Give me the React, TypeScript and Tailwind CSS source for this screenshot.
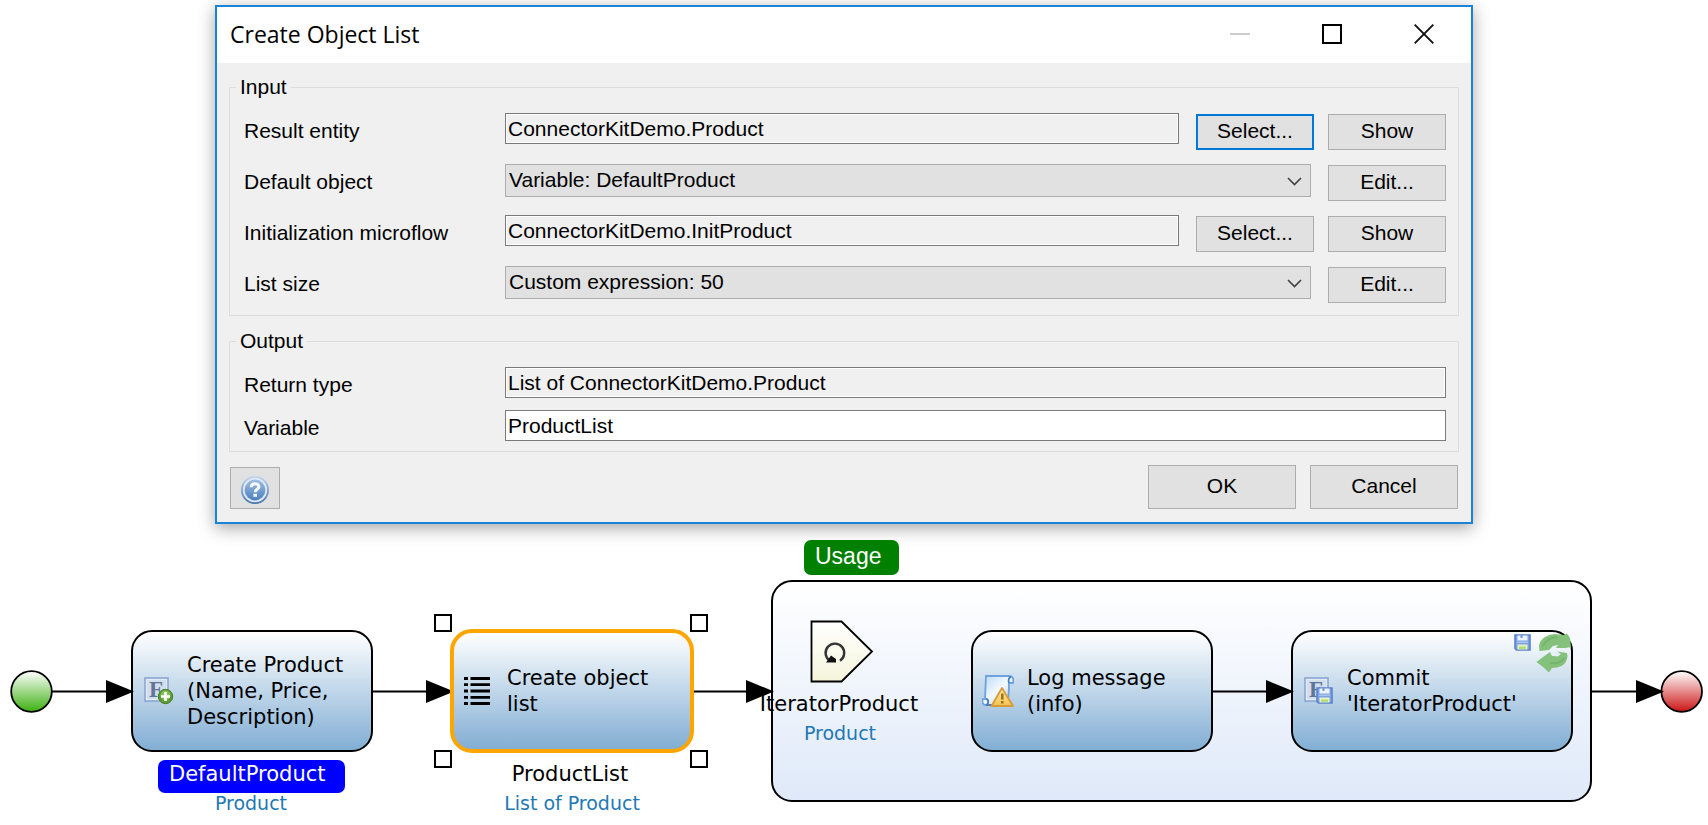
import type { ReactNode } from "react";

const buttonBase =
  "shrink-0 bg-[#e1e1e1] text-center text-[21px] leading-[24px] text-black";

function DialogButton({ children, focused = false }: { children: ReactNode; focused?: boolean }) {
  return (
    <button
      type="button"
      className={
        buttonBase +
        " h-[36px] w-[118px] self-end pb-[3px] " +
        (focused ? "border-2 border-[#0078d7]" : "border border-[#adadad]")
      }
    >
      {children}
    </button>
  );
}

function FormRow({ id, label, children }: { id: string; label: string; children: ReactNode }) {
  return (
    <div className="flex h-[37px] items-start">
      <label htmlFor={id} className="w-[261px] shrink-0 text-[21px] leading-[36px]">
        {label}
      </label>
      {children}
    </div>
  );
}

function TextField({ id, value, readOnly = false }: { id: string; value: string; readOnly?: boolean }) {
  return (
    <input
      id={id}
      type="text"
      defaultValue={value}
      readOnly={readOnly}
      className={
        "h-[31px] min-w-0 flex-1 rounded-none border border-[#7a7a7a] pl-[2px] text-[21px] leading-[24px] outline-none " +
        (readOnly ? "bg-[#f0f0f0] shadow-[inset_0_0_0_1px_#ffffff]" : "bg-white")
      }
    />
  );
}

function ComboField({ id, value }: { id: string; value: string }) {
  return (
    <div className="relative min-w-0 flex-1">
      <select
        id={id}
        defaultValue={value}
        className="block h-[33px] w-full appearance-none rounded-none border border-[#adadad] bg-[#e1e1e1] pb-[2px] pl-[3px] text-[21px] leading-[24px] outline-none"
      >
        <option>{value}</option>
      </select>
      <svg
        className="pointer-events-none absolute top-[13px] right-[9px] h-[9px] w-[15px]"
        viewBox="0 0 15 9"
        fill="none"
        stroke="#404040"
        strokeWidth="1.6"
      >
        <path d="M1 1L7.5 7.5L14 1" />
      </svg>
    </div>
  );
}

function HelpIcon() {
  return (
    <svg className="h-[30px] w-[30px]" viewBox="0 0 30 30" aria-hidden="true">
      <defs>
        <linearGradient id="helpRing" x1="0" y1="0" x2="0" y2="1">
          <stop offset="0" stopColor="#c3d7ee" />
          <stop offset="1" stopColor="#4472ae" />
        </linearGradient>
        <linearGradient id="helpFill" x1="0" y1="0" x2="0" y2="1">
          <stop offset="0" stopColor="#9dbde3" />
          <stop offset="1" stopColor="#4f80bd" />
        </linearGradient>
      </defs>
      <circle cx="15" cy="15" r="14" fill="url(#helpRing)" />
      <circle cx="15" cy="15" r="12.2" fill="#dfe9f5" />
      <circle cx="15" cy="15" r="10.4" fill="url(#helpFill)" />
      <path
        d="M11.3 12.2C11.3 7.6 18.9 7.8 18.9 11.8C18.9 14.4 15.2 14.2 15.2 17.2"
        fill="none"
        stroke="#f4f8fc"
        strokeWidth="3"
      />
      <rect x="13.4" y="18.8" width="3.6" height="3" fill="#f4f8fc" />
    </svg>
  );
}

function EntityGlyph() {
  return (
    <>
      <rect x="1" y="1" width="23" height="23" fill="#e3ebf5" stroke="#8ba6d3" strokeWidth="1.6" />
      <rect x="3" y="3" width="19" height="19" fill="#d3deec" />
      <text x="5" y="20" fontFamily="Liberation Serif, serif" fontWeight="700" fontSize="23" fill="#5f7699">
        F
      </text>
    </>
  );
}

function FloppyGlyph() {
  return (
    <>
      <path d="M1 1H16V16H2.5L1 14.5Z" fill="#7fa3e2" stroke="#5b82cd" strokeWidth="1.6" />
      <rect x="3.500" y="1.500" width="10" height="5" fill="#eef4fc" />
      <rect x="6.500" y="1" width="2" height="3" fill="#6d94dd" />
      <rect x="3" y="7.500" width="11" height="1.500" fill="#a9c3ee" />
      <rect x="3.500" y="10.500" width="10" height="5" fill="#e6f2c4" />
      <rect x="5" y="12.500" width="7" height="2.400" fill="#b4dc74" />
    </>
  );
}

function CreateIcon() {
  return (
    <svg className="h-[28px] w-[30px]" viewBox="0 0 30 28" aria-hidden="true">
      <EntityGlyph />
      <circle cx="21.5" cy="19.5" r="7.2" fill="#5d9a35" stroke="#437f25" strokeWidth="1" />
      <circle cx="21.5" cy="18.5" r="5" fill="#86bd58" />
      <path d="M21.5 15V24M17 19.5H26" stroke="#ffffff" strokeWidth="2.6" />
    </svg>
  );
}

function ListIcon() {
  return (
    <svg className="h-[28px] w-[26px]" viewBox="0 0 26 28" aria-hidden="true">
      <path
        d="M0 1.5H4M6.500 1.500H26M0 7.700H4M6.500 7.700H26M0 14H4M6.500 14H26M0 20.300H4M6.500 20.300H26M0 26.500H4M6.500 26.500H26"
        stroke="#000000"
        strokeWidth="2.8"
      />
    </svg>
  );
}

function LogIcon() {
  return (
    <svg className="h-[34px] w-[32px]" viewBox="0 0 32 34" aria-hidden="true">
      <defs>
        <linearGradient id="scroll" x1="0" y1="0" x2="1" y2="1">
          <stop offset="0" stopColor="#b9d8f8" />
          <stop offset="0.5" stopColor="#f3f9ff" />
          <stop offset="1" stopColor="#a5c8f0" />
        </linearGradient>
        <linearGradient id="warn" x1="0" y1="0" x2="0" y2="1">
          <stop offset="0" stopColor="#fff0b5" />
          <stop offset="1" stopColor="#f5c04a" />
        </linearGradient>
      </defs>
      <path
        d="M4 2H27C31 2 32 5 31 9H27C27 16 27 22 25 31H4C0 31 0 27 1 25H3Z"
        fill="url(#scroll)"
        stroke="#6ea3dd"
        strokeWidth="1.800"
      />
      <path d="M27 9C26 6 27 3 29 3M4 25C7 25 7 30 4 31H16" fill="none" stroke="#4a7fc4" strokeWidth="1.800" />
      <path d="M20 14L31 32H9.500Z" fill="url(#warn)" stroke="#d99a3a" strokeWidth="1.800" strokeLinejoin="round" />
      <path d="M20.300 19.500V25.500M20.300 27V29.500" stroke="#9a6a14" strokeWidth="2.400" />
    </svg>
  );
}

function CommitIcon() {
  return (
    <svg className="h-[28px] w-[30px]" viewBox="0 0 30 28" aria-hidden="true">
      <EntityGlyph />
      <g transform="translate(12 10)">
        <FloppyGlyph />
      </g>
    </svg>
  );
}

function RefreshIcon() {
  return (
    <svg className="h-[39px] w-[36px]" viewBox="0 0 36 39" fill="#84c17a" aria-hidden="true">
      <path d="M3.500 18L3 13C4 6 10 2 19 1L28 2L31 0.500L34 5L35 14L29 15L20 15L22 12L17 13L13 17Z" />
      <path d="M0.500 29L7 24L14 19L16 23L22 23.500L25 21L21 18.500L31 20L31.500 23C31 29 28 33 21 34.500L16 35L13 39.500L7 34Z" />
      <path d="M7 13C9 8 13 5 21 4M28 25C26 29 22 31 14 30" fill="none" stroke="#74b470" strokeWidth="2" />
    </svg>
  );
}

function Activity({
  icon,
  children,
  className,
  selected = false,
}: {
  icon: ReactNode;
  children: ReactNode;
  className: string;
  selected?: boolean;
}) {
  return (
    <div
      className={
        "absolute flex items-center bg-linear-to-b from-white to-[#82aed3] text-[21px] leading-[26px] " +
        (selected
          ? "h-[124px] rounded-[22px] border-4 border-[#ffa500] pl-[10px] "
          : "h-[122px] rounded-[21px] border-2 border-black pl-[11px] ") +
        className
      }
    >
      <div className="flex w-[43px] shrink-0 justify-start">{icon}</div>
      <p>{children}</p>
    </div>
  );
}

function Connectors() {
  const arrows = [
    [52, 106],
    [372, 426],
    [693, 746],
    [1212, 1266],
    [1592, 1636],
  ];
  return (
    <svg className="absolute top-0 left-0 h-[300px] w-[1708px]" viewBox="0 0 1708 300" aria-hidden="true">
      <defs>
        <linearGradient id="startFill" x1="0" y1="0" x2="0" y2="1">
          <stop offset="0" stopColor="#ffffff" />
          <stop offset="1" stopColor="#3cb010" />
        </linearGradient>
        <linearGradient id="endFill" x1="0" y1="0" x2="0" y2="1">
          <stop offset="0" stopColor="#ffffff" />
          <stop offset="1" stopColor="#cc1414" />
        </linearGradient>
        <linearGradient id="iteratorFill" x1="0" y1="0" x2="0" y2="1">
          <stop offset="0" stopColor="#ffffff" />
          <stop offset="1" stopColor="#f5f5dc" />
        </linearGradient>
      </defs>
      <circle cx="31.5" cy="167.500" r="20.300" fill="url(#startFill)" stroke="#000000" strokeWidth="1.800" />
      <circle cx="1681.700" cy="167.500" r="20.300" fill="url(#endFill)" stroke="#000000" strokeWidth="1.800" />
      {arrows.map(([from, head]) => (
        <g key={from}>
          <path d={`M${from} 167.500H${head}`} stroke="#000000" strokeWidth="1.800" />
          <path d={`M${head} 156V179L${head + 28} 167.500Z`} fill="#000000" />
        </g>
      ))}
      <path
        d="M811.500 97.500H841.500L872 127.500L841.500 157.500H811.500Z"
        fill="url(#iteratorFill)"
        stroke="#000000"
        strokeWidth="1.800"
      />
      <path
        d="M829.500 136.500A9.300 9.300 0 1 1 840 136.700"
        fill="none"
        stroke="#333333"
        strokeWidth="2.400"
      />
      <path d="M826 138.500H836V135L831 131.500Z" fill="#111111" />
    </svg>
  );
}

const nameLabel = "absolute text-center text-[21px] leading-[26px] whitespace-nowrap ";
const typeLabel = "absolute text-center text-[19px] leading-[24px] whitespace-nowrap text-[#1e78b4] ";
const handle = "absolute size-[18px] border-2 border-black bg-white ";

export default function App() {
  return (
    <main className="overflow-hidden bg-white font-['Liberation_Sans',Arial,sans-serif] text-black">
      <div className="pt-[5px] pr-[235px] pl-[215px]">
        <section
          role="dialog"
          aria-labelledby="dialog-title"
          className="border-2 border-[#1883d7] bg-[#f0f0f0] shadow-[0_4px_16px_rgba(0,0,0,0.36)]"
        >
          <header className="flex h-[56px] items-center bg-white pr-px pb-[2px] pl-[13px]">
            <h1
              id="dialog-title"
              className="flex-1 font-['Open_Sans','Noto_Sans',sans-serif] text-[23px] leading-[30px]"
            >
              Create Object List
            </h1>
            <button type="button" aria-label="Minimize" className="flex h-full w-[92px] items-center justify-center">
              <span className="h-[2px] w-[20px] bg-[#cccccc]" />
            </button>
            <button type="button" aria-label="Maximize" className="flex h-full w-[92px] items-center justify-center">
              <span className="size-[20px] border-2 border-black" />
            </button>
            <button type="button" aria-label="Close" className="flex h-full w-[92px] items-center justify-center">
              <svg className="size-[20px]" viewBox="0 0 20 20" stroke="#111111" strokeWidth="1.900">
                <path d="M0.700 0.700L19.300 19.300M19.300 0.700L0.700 19.300" />
              </svg>
            </button>
          </header>

          <form className="px-[12px] pt-[12px] pb-[13px]">
            <fieldset className="border border-[#dcdcdc] pt-[14px] pr-[12px] pb-[12px] pl-[14px]">
              <legend className="-ml-[8px] px-1 text-[21px] leading-[24px]">Input</legend>
              <div className="flex flex-col gap-[14px]">
                <FormRow id="result-entity" label="Result entity">
                  <TextField id="result-entity" value="ConnectorKitDemo.Product" readOnly />
                  <div className="ml-[17px] flex h-full gap-[14px]">
                    <DialogButton focused>Select...</DialogButton>
                    <DialogButton>Show</DialogButton>
                  </div>
                </FormRow>
                <FormRow id="default-object" label="Default object">
                  <ComboField id="default-object" value="Variable: DefaultProduct" />
                  <div className="ml-[17px] flex h-full">
                    <DialogButton>Edit...</DialogButton>
                  </div>
                </FormRow>
                <FormRow id="init-microflow" label="Initialization microflow">
                  <TextField id="init-microflow" value="ConnectorKitDemo.InitProduct" readOnly />
                  <div className="ml-[17px] flex h-full gap-[14px]">
                    <DialogButton>Select...</DialogButton>
                    <DialogButton>Show</DialogButton>
                  </div>
                </FormRow>
                <FormRow id="list-size" label="List size">
                  <ComboField id="list-size" value="Custom expression: 50" />
                  <div className="ml-[17px] flex h-full">
                    <DialogButton>Edit...</DialogButton>
                  </div>
                </FormRow>
              </div>
            </fieldset>

            <fieldset className="mt-[13px] border border-[#dcdcdc] pt-[14px] pr-[12px] pb-[4px] pl-[14px]">
              <legend className="-ml-[8px] px-1 text-[21px] leading-[24px]">Output</legend>
              <div className="flex flex-col gap-[6px]">
                <FormRow id="return-type" label="Return type">
                  <TextField id="return-type" value="List of ConnectorKitDemo.Product" readOnly />
                </FormRow>
                <FormRow id="variable" label="Variable">
                  <TextField id="variable" value="ProductList" />
                </FormRow>
              </div>
            </fieldset>

            <div className="mt-[13px] flex items-end gap-[14px] px-px">
              <button
                type="button"
                aria-label="Help"
                className="mr-auto flex h-[42px] w-[50px] items-center justify-center border border-[#adadad] bg-[#e1e1e1] pt-[3px]"
              >
                <HelpIcon />
              </button>
              <button type="button" className={buttonBase + " h-[44px] w-[148px] border border-[#adadad] pb-[3px]"}>
                OK
              </button>
              <button type="button" className={buttonBase + " h-[44px] w-[148px] border border-[#adadad] pb-[3px]"}>
                Cancel
              </button>
            </div>
          </form>
        </section>
      </div>

      <section
        aria-label="Microflow"
        className="relative h-[300px] min-w-[1708px] font-['DejaVu_Sans',Verdana,sans-serif]"
      >
        <div className="absolute top-[56px] left-[771px] h-[222px] w-[821px] rounded-[21px] border-2 border-black bg-linear-to-b from-white to-[#dfe9f9]" />

        <Activity className="top-[106px] left-[131px] w-[242px]" icon={<CreateIcon />}>
          Create Product
          <br />
          (Name, Price,
          <br />
          Description)
        </Activity>
        <Activity className="top-[106px] left-[971px] w-[242px]" icon={<div className="-ml-[2px]"><LogIcon /></div>}>
          Log message
          <br />
          (info)
        </Activity>
        <Activity className="top-[106px] left-[1291px] w-[282px]" icon={<CommitIcon />}>
          Commit
          <br />
          'IteratorProduct'
        </Activity>
        <svg className="absolute top-[110px] left-[1514px] size-[17px]" viewBox="0 0 17 17" aria-hidden="true">
          <FloppyGlyph />
        </svg>
        <div className="absolute top-[109px] left-[1536px]">
          <RefreshIcon />
        </div>

        <Connectors />

        <Activity selected className="top-[105px] left-[450px] w-[244px]" icon={<ListIcon />}>
          Create object
          <br />
          list
        </Activity>
        <span className={handle + "top-[90px] left-[434px]"} />
        <span className={handle + "top-[90px] left-[690px]"} />
        <span className={handle + "top-[226px] left-[434px]"} />
        <span className={handle + "top-[226px] left-[690px]"} />

        <div className="absolute top-[236px] left-[158px] h-[33px] w-[187px] rounded-[7px] bg-[#0000ff] pl-[11px] text-[21px] leading-[28px] text-white">
          DefaultProduct
        </div>
        <div className={typeLabel + "top-[267px] left-[130px] w-[242px]"}>Product</div>

        <div className={nameLabel + "top-[237px] left-[449px] w-[242px]"}>ProductList</div>
        <div className={typeLabel + "top-[267px] left-[451px] w-[242px]"}>List of Product</div>

        <div className="absolute top-[16px] left-[804px] h-[35px] w-[95px] rounded-[7px] bg-[#008000] pl-[11px] font-['Liberation_Sans',Arial,sans-serif] text-[23px] leading-[32px] text-white">
          Usage
        </div>
        <div className={nameLabel + "top-[167px] left-[739px] w-[200px]"}>IteratorProduct</div>
        <div className={typeLabel + "top-[197px] left-[740px] w-[200px]"}>Product</div>
      </section>
    </main>
  );
}
